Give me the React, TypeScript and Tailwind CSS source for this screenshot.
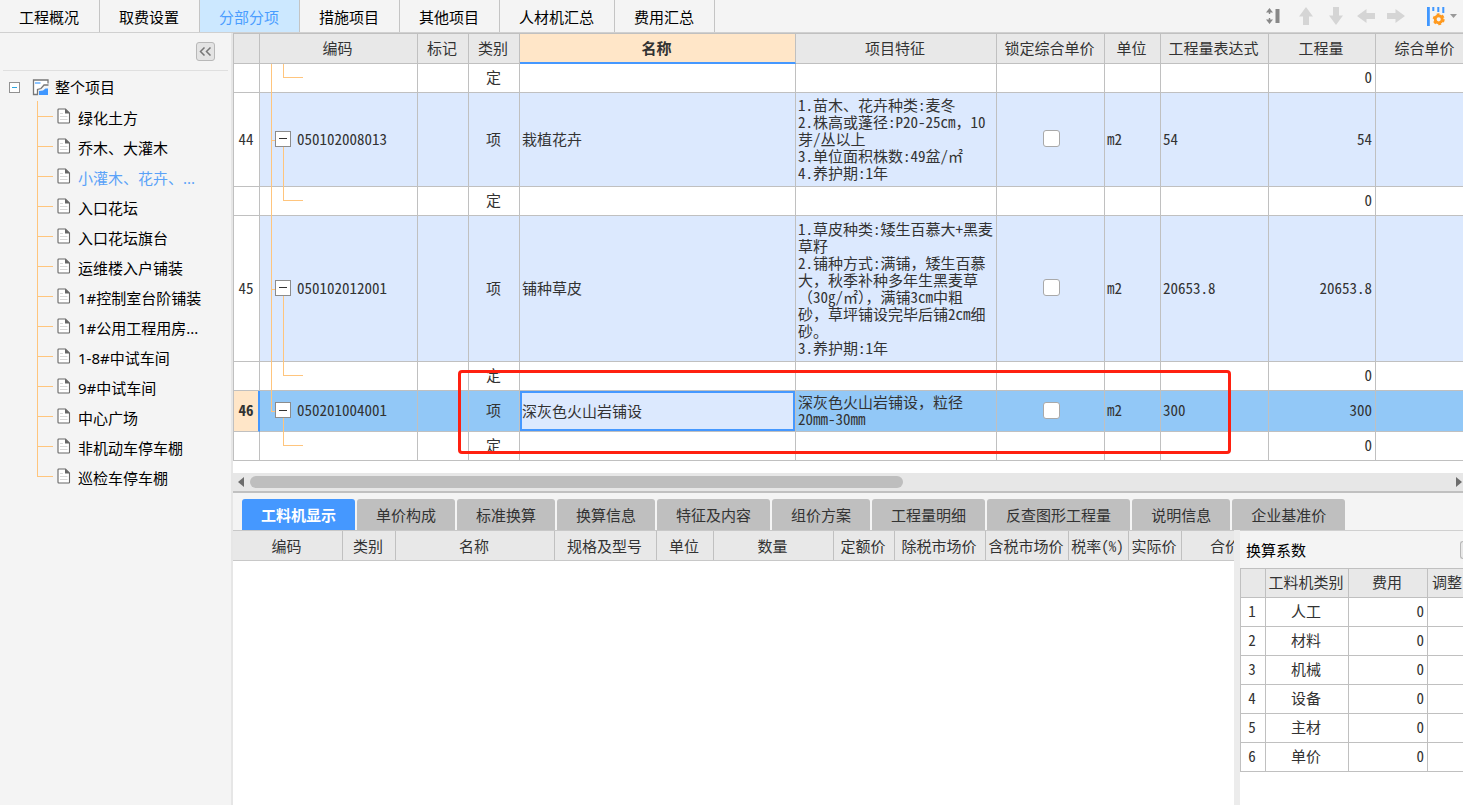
import React from "react";

const pageFont = "font-['Noto_Sans','Noto_Sans_CJK_SC',sans-serif]";
const gridFont = "font-['Noto_Sans_Mono_CJK_SC','Noto_Sans_CJK_SC',monospace]";

const mainTabs = ["工程概况", "取费设置", "分部分项", "措施项目", "其他项目", "人材机汇总", "费用汇总"];

const treeItems = [
  "绿化土方",
  "乔木、大灌木",
  "小灌木、花卉、...",
  "入口花坛",
  "入口花坛旗台",
  "运维楼入户铺装",
  "1#控制室台阶铺装",
  "1#公用工程用房...",
  "1-8#中试车间",
  "9#中试车间",
  "中心广场",
  "非机动车停车棚",
  "巡检车停车棚",
];

type Row = {
  kind: "item" | "sub";
  height: string;
  no?: string;
  code?: string;
  name?: string;
  feature?: string[];
  expr?: string;
  qty: string;
  active?: boolean;
  outer: "full" | "half" | "none";
};

const rows: Row[] = [
  { kind: "sub", height: "h-[29px]", qty: "0", outer: "full" },
  {
    kind: "item",
    height: "h-[94px]",
    no: "44",
    code: "050102008013",
    name: "栽植花卉",
    feature: ["1.苗木、花卉种类:麦冬", "2.株高或蓬径:P20-25cm，10", "芽/丛以上", "3.单位面积株数:49盆/㎡", "4.养护期:1年"],
    expr: "54",
    qty: "54",
    outer: "full",
  },
  { kind: "sub", height: "h-[29px]", qty: "0", outer: "full" },
  {
    kind: "item",
    height: "h-[146px]",
    no: "45",
    code: "050102012001",
    name: "铺种草皮",
    feature: [
      "1.草皮种类:矮生百慕大+黑麦",
      "草籽",
      "2.铺种方式:满铺，矮生百慕",
      "大，秋季补种多年生黑麦草",
      "（30g/㎡），满铺3cm中粗",
      "砂，草坪铺设完毕后铺2cm细",
      "砂。",
      "3.养护期:1年",
    ],
    expr: "20653.8",
    qty: "20653.8",
    outer: "full",
  },
  { kind: "sub", height: "h-[29px]", qty: "0", outer: "full" },
  {
    kind: "item",
    height: "h-[41px]",
    no: "46",
    code: "050201004001",
    name: "深灰色火山岩铺设",
    feature: ["深灰色火山岩铺设，粒径", "20mm-30mm"],
    expr: "300",
    qty: "300",
    active: true,
    outer: "half",
  },
  { kind: "sub", height: "h-[29px]", qty: "0", outer: "none" },
];

const detailTabs = [
  "工料机显示",
  "单价构成",
  "标准换算",
  "换算信息",
  "特征及内容",
  "组价方案",
  "工程量明细",
  "反查图形工程量",
  "说明信息",
  "企业基准价",
];

const factors = ["人工", "材料", "机械", "设备", "主材", "单价"];

function ArrowIcon({ turn }: { turn: string }) {
  return (
    <svg viewBox="0 0 18 18" className={`h-[18px] w-[18px] ${turn}`} aria-hidden="true">
      <path d="M9 0 16 9.5H12V18H6V9.5H2Z" fill="#d5d5d5" />
    </svg>
  );
}

function DocIcon() {
  return (
    <svg viewBox="0 0 14 16" className="h-4 w-[14px] shrink-0" aria-hidden="true">
      <path d="M1.7 1H8.5L12.5 5V14.3a.7.7 0 0 1-.7.7H1.7a.7.7 0 0 1-.7-.7V1.7A.7.7 0 0 1 1.7 1Z" fill="#fff" stroke="#666" strokeWidth="1.1" />
      <path d="M8 .8 13 5.6H8Z" fill="#666" />
      <path d="M3 8.5H10.500M3 11.5H10.500M3 5.500H6" stroke="#d8d8d8" />
    </svg>
  );
}

function ProjectIcon() {
  return (
    <svg viewBox="0 0 17 17" className="h-[17px] w-[17px] shrink-0" aria-hidden="true">
      <path d="M16 4.500V1H1.500V15.500H5.500V10.500L9 9.500 12 6H16.500" fill="#fff" stroke="#777" strokeWidth="1.300" />
      <path d="M3 4H8.500" stroke="#8cc4ff" strokeWidth="2" />
      <path d="M7 16V12L11 11.500 13.500 9.500H16V16Z" fill="#3f97ff" />
    </svg>
  );
}

function Sidebar() {
  return (
    <aside className="flex w-[233px] shrink-0 flex-col border-r-2 border-[#e6e6e6] bg-[#f4f4f4]">
      <div className="mx-[3px] flex h-[38px] items-center justify-end border-b border-[#dfdfdf] pr-[13px]">
        <button aria-label="收起" className="flex h-[19px] w-[19px] items-center justify-center rounded-[3px] border border-[#b8b8b8] bg-[#e4e4e4]">
          <svg viewBox="0 0 13 9" className="h-[9px] w-[13px]" aria-hidden="true">
            <path d="M5.500.5 1.500 4.500l4 4M11.500.5l-4 4 4 4" fill="none" stroke="#777" strokeWidth="1.500" />
          </svg>
        </button>
      </div>
      <div className="flex h-[30px] items-center pl-[9px] pt-[2px]">
        <button aria-label="折叠整个项目" className="flex h-[11px] w-[11px] items-center justify-center border border-[#919191] bg-white">
          <span className="h-px w-[5px] bg-[#2aa5e0]" />
        </button>
        <span className="ml-3">
          <ProjectIcon />
        </span>
        <span className="ml-[6px] text-[15px] leading-[18px]">整个项目</span>
      </div>
      <ul className="ml-[37px]">
        {treeItems.map((t, i) => (
          <li key={t} className="flex h-[30px] items-center">
            <span className="flex w-4 flex-col self-stretch">
              <span className="h-4 border-b border-l border-[#ffc57d]" />
              {i < treeItems.length - 1 && <span className="flex-1 border-l border-[#ffc57d]" />}
            </span>
            <a href="#" className={`flex items-center pl-1 text-[15px] leading-[18px] ${i === 2 ? "text-[#5aa2f8]" : "text-black"}`}>
              <DocIcon />
              <span className="whitespace-nowrap pl-[7px] pt-[3px]">{t}</span>
            </a>
          </li>
        ))}
      </ul>
    </aside>
  );
}

function CodeCell({ row }: { row: Row }) {
  const line = "border-[#ffc57d]";
  return (
    <>
      {row.outer === "full" && <span className={`absolute -bottom-px left-[11px] top-0 border-l ${line}`} />}
      {row.outer === "half" && <span className={`absolute left-[11px] top-0 h-1/2 border-l ${line}`} />}
      {row.kind === "sub" ? (
        <span className={`absolute left-[23px] top-0 h-[14px] w-5 border-b border-l ${line}`} />
      ) : (
        <>
          <span className={`absolute left-[11px] top-1/2 w-1 border-t ${line}`} />
          <span className={`absolute -bottom-px left-[23px] top-1/2 border-l ${line}`} />
          <span className="relative flex items-center gap-[6px] pl-[15px]">
            <button aria-label="折叠" className="flex h-4 w-4 items-center justify-center border border-[#8c8c8c] bg-white">
              <span className="h-px w-2 bg-[#333]" />
            </button>
            <span>{row.code}</span>
          </span>
        </>
      )}
    </>
  );
}

function MainGrid() {
  const th = "border-b border-r border-[#c0c0c0] bg-[#e8e8e8] pb-[2px] pr-[2px] font-normal";
  const td = "border-b border-r border-[#c0c0c0] pb-[2px]";
  return (
    <div className="relative overflow-hidden bg-white pb-3">
      <table className={`w-full min-w-[1243px] table-fixed border-separate border-spacing-0 border-l border-t border-[#c0c0c0] text-[15px] leading-[18px] text-[#333] ${gridFont}`}>
        <colgroup>
          <col className="w-[26px]" />
          <col className="w-[158px]" />
          <col className="w-[51px]" />
          <col className="w-[51px]" />
          <col className="w-[276px]" />
          <col className="w-[201px]" />
          <col className="w-[108px]" />
          <col className="w-[56px]" />
          <col className="w-[108px]" />
          <col className="w-[107px]" />
          <col className="w-[100px]" />
        </colgroup>
        <thead>
          <tr className="h-[30px]">
            <th className={th} />
            <th className={th}>编码</th>
            <th className={th}>标记</th>
            <th className={th}>类别</th>
            <th className="border-b-2 border-r border-b-[#4598ff] border-r-[#c0c0c0] bg-[#ffe6c8] pb-px pr-[2px] font-bold">名称</th>
            <th className={th}>项目特征</th>
            <th className={th}>锁定综合单价</th>
            <th className={th}>单位</th>
            <th className={th}>工程量表达式</th>
            <th className={th}>工程量</th>
            <th className={th}>综合单价</th>
          </tr>
        </thead>
        <tbody>
          {rows.map((r, i) => {
            const item = r.kind === "item";
            const bg = r.active ? "bg-[#92c8f7]" : item ? "bg-[#dce9fe]" : "bg-white";
            return (
              <tr key={i} className={`${r.height} ${bg}`}>
                <td className={`${td} text-center ${r.active ? "border-r-2 border-r-[#4598ff] bg-[#ffe6c8] font-bold" : "bg-white pr-px"}`}>{r.no}</td>
                <td className={`${td} relative`}>
                  <CodeCell row={r} />
                </td>
                <td className={td} />
                <td className={`${td} pr-px text-center`}>{item ? "项" : "定"}</td>
                {r.active ? (
                  <td className={`${td} relative`}>
                    <input aria-label="名称" defaultValue={r.name} className="absolute inset-0 h-full w-full border-2 border-[#4598ff] bg-[#dce9fe] pb-[2px] outline-none" />
                  </td>
                ) : (
                  <td className={`${td} pl-[2px]`}>{r.name}</td>
                )}
                <td className={`${td} whitespace-nowrap pl-[2px] leading-[17px]`}>
                  {r.feature?.map((f) => (
                    <div key={f}>{f}</div>
                  ))}
                </td>
                <td className={`${td} pl-[2px]`}>
                  {item && (
                    <input type="checkbox" aria-label={`锁定综合单价 ${r.no}`} className="mx-auto block h-[17px] w-[17px] appearance-none rounded-[3px] border border-[#a9a9a9] bg-white" />
                  )}
                </td>
                <td className={`${td} pl-[2px]`}>{item ? "m2" : ""}</td>
                <td className={`${td} pl-[2px]`}>{r.expr}</td>
                <td className={`${td} pr-[3px] text-right`}>{r.qty}</td>
                <td className={td} />
              </tr>
            );
          })}
        </tbody>
      </table>
      <div className="pointer-events-none absolute left-[225px] top-[337px] h-[84px] w-[773px] rounded-[4px] border-[3px] border-[#ff2010]" />
    </div>
  );
}

function DetailGrid() {
  const th = "border-r border-[#c0c0c0] p-0 pr-[2px] font-normal";
  return (
    <div className="min-w-0 flex-1 overflow-hidden bg-white">
      <table className={`w-full min-w-[1038px] table-fixed border-separate border-spacing-0 border-y border-[#c8c8c8] bg-[#e8e8e8] text-[15px] leading-[18px] text-[#333] ${gridFont}`}>
        <thead>
          <tr className="h-[29px] whitespace-nowrap">
            <th className={`${th} w-[110px]`}>编码</th>
            <th className={`${th} w-[53px]`}>类别</th>
            <th className={`${th} w-[159px]`}>名称</th>
            <th className={`${th} w-[102px]`}>规格及型号</th>
            <th className={`${th} w-[57px]`}>单位</th>
            <th className={`${th} w-[120px]`}>数量</th>
            <th className={`${th} w-[61px]`}>定额价</th>
            <th className={`${th} w-[91px]`}>除税市场价</th>
            <th className={`${th} w-[83px]`}>含税市场价</th>
            <th className={`${th} w-[60px]`}>税率(%)</th>
            <th className={`${th} w-[53px]`}>实际价</th>
            <th className={`${th} w-[89px]`}>合价</th>
          </tr>
        </thead>
      </table>
    </div>
  );
}

function FactorPanel() {
  const cell = "border-b border-r border-[#c0c0c0] pb-[2px]";
  return (
    <section className="flex w-[229px] shrink-0 flex-col overflow-hidden border-l-[6px] border-[#ececec] bg-white">
      <div className="flex h-[38px] items-center justify-between border-t border-[#d0d0d0] bg-[#f4f4f4] pl-[6px]">
        <h2 className={`text-[15px] leading-[18px] text-black ${gridFont}`}>换算系数</h2>
        <button aria-label="收起换算系数" className="h-[18px] w-[3px] rounded-l-[3px] border border-r-0 border-[#b8b8b8] bg-[#e8e8e8]" />
      </div>
      <table className={`w-[277px] table-fixed border-separate border-spacing-0 border-l border-t border-[#c0c0c0] text-[15px] leading-[18px] text-[#333] ${gridFont}`}>
        <thead>
          <tr className="h-[29px] bg-[#e8e8e8]">
            <th className={`${cell} w-[25px]`} />
            <th className={`${cell} w-[83px] pr-[2px] font-normal`}>工料机类别</th>
            <th className={`${cell} w-[79px] pr-[2px] font-normal`}>费用</th>
            <th className={`${cell} w-[89px] pl-1 text-left font-normal`}>调整</th>
          </tr>
        </thead>
        <tbody>
          {factors.map((f, i) => (
            <tr key={f} className="h-[29px]">
              <td className={`${cell} pr-[2px] text-center`}>{i + 1}</td>
              <td className={`${cell} pr-[2px] text-center`}>{f}</td>
              <td className={`${cell} pr-[3px] text-right`}>0</td>
              <td className={cell} />
            </tr>
          ))}
        </tbody>
      </table>
    </section>
  );
}

export default function App() {
  return (
    <div className={`flex min-h-screen flex-col overflow-hidden bg-[#f4f4f4] text-black ${pageFont}`}>
      <header className="flex h-[33px] items-stretch border-b border-[#d0d0d0]">
        <nav className="flex">
          {mainTabs.map((t, i) => (
            <button
              key={t}
              className={`border-r border-[#c4c4c4] pl-[19px] pr-5 pt-[2px] text-[15px] leading-[18px] ${i === 2 ? "bg-[#cce8ff] text-[#4a9dff]" : "text-black"}`}
            >
              {t}
            </button>
          ))}
        </nav>
        <div className="ml-auto flex items-center pr-[6px]">
          <button aria-label="调整行高" className="flex w-[34px] justify-center pr-[3px]">
            <svg viewBox="0 0 14 16" className="h-4 w-[14px]" aria-hidden="true">
              <path d="M3.500 0 7 4.500H0ZM3.500 16 7 11.500H0Z" fill="#888" />
              <path d="M2.800 3V6H4.200V3ZM2.800 10V13H4.200V10Z" fill="#888" />
              <path d="M9.500 1H13.500V15H9.500Z" fill="#888" />
            </svg>
          </button>
          <button aria-label="上移" className="flex w-[30px] justify-center"><ArrowIcon turn="rotate-0" /></button>
          <button aria-label="下移" className="flex w-[30px] justify-center"><ArrowIcon turn="rotate-180" /></button>
          <button aria-label="左移" className="flex w-[30px] justify-center"><ArrowIcon turn="-rotate-90" /></button>
          <button aria-label="右移" className="flex w-[30px] justify-center"><ArrowIcon turn="rotate-90" /></button>
          <button aria-label="列设置" className="ml-4 flex items-center gap-[5px]">
            <svg viewBox="0 0 18 19" className="h-[19px] w-[18px]" aria-hidden="true">
              <path d="M0 0H2.800V19H0Z" fill="#3f97ff" />
              <path d="M6.300 0V4M11.300 0V5M16.300 0V6" stroke="#3f97ff" strokeWidth="2" />
              <circle cx="11.700" cy="12.300" r="3.500" fill="none" stroke="#ff9a1f" strokeWidth="2.800" />
              <circle cx="11.700" cy="12.300" r="5" fill="none" stroke="#ff9a1f" strokeWidth="2" strokeDasharray="2.800 2.436" />
            </svg>
            <svg viewBox="0 0 7 4" className="h-1 w-[7px]" aria-hidden="true">
              <path d="M0 0H7L3.500 4Z" fill="#999" />
            </svg>
          </button>
        </div>
      </header>
      <div className="flex flex-1">
        <Sidebar />
        <main className="flex min-w-0 flex-1 flex-col">
          <MainGrid />
          <div className="flex h-[18px] items-center gap-[6px] bg-[#e7e7e7] px-[5px]">
            <svg viewBox="0 0 6 10" className="h-[10px] w-[6px]" aria-hidden="true"><path d="M6 0V10L0 5Z" fill="#6d6d6d" /></svg>
            <div className="flex-1">
              <div className="h-3 w-[54.4%] rounded-full bg-[#bebebe]" />
            </div>
            <svg viewBox="0 0 6 10" className="-mr-1 h-[10px] w-[6px]" aria-hidden="true"><path d="M0 0V10L6 5Z" fill="#6d6d6d" /></svg>
          </div>
          <div className="flex gap-[2px] overflow-hidden border-t-2 border-[#c0c0c0] pl-[9px] pt-[6px]">
            {detailTabs.map((t, i) => (
              <button
                key={t}
                className={`h-[31px] shrink-0 rounded-t-[3px] px-[19px] text-[15px] leading-[18px] ${i === 0 ? "bg-[#4598ff] font-bold text-white" : "bg-[#bfbfbf] text-[#333]"}`}
              >
                {t}
              </button>
            ))}
          </div>
          <div className="flex flex-1">
            <DetailGrid />
            <FactorPanel />
          </div>
        </main>
      </div>
    </div>
  );
}
